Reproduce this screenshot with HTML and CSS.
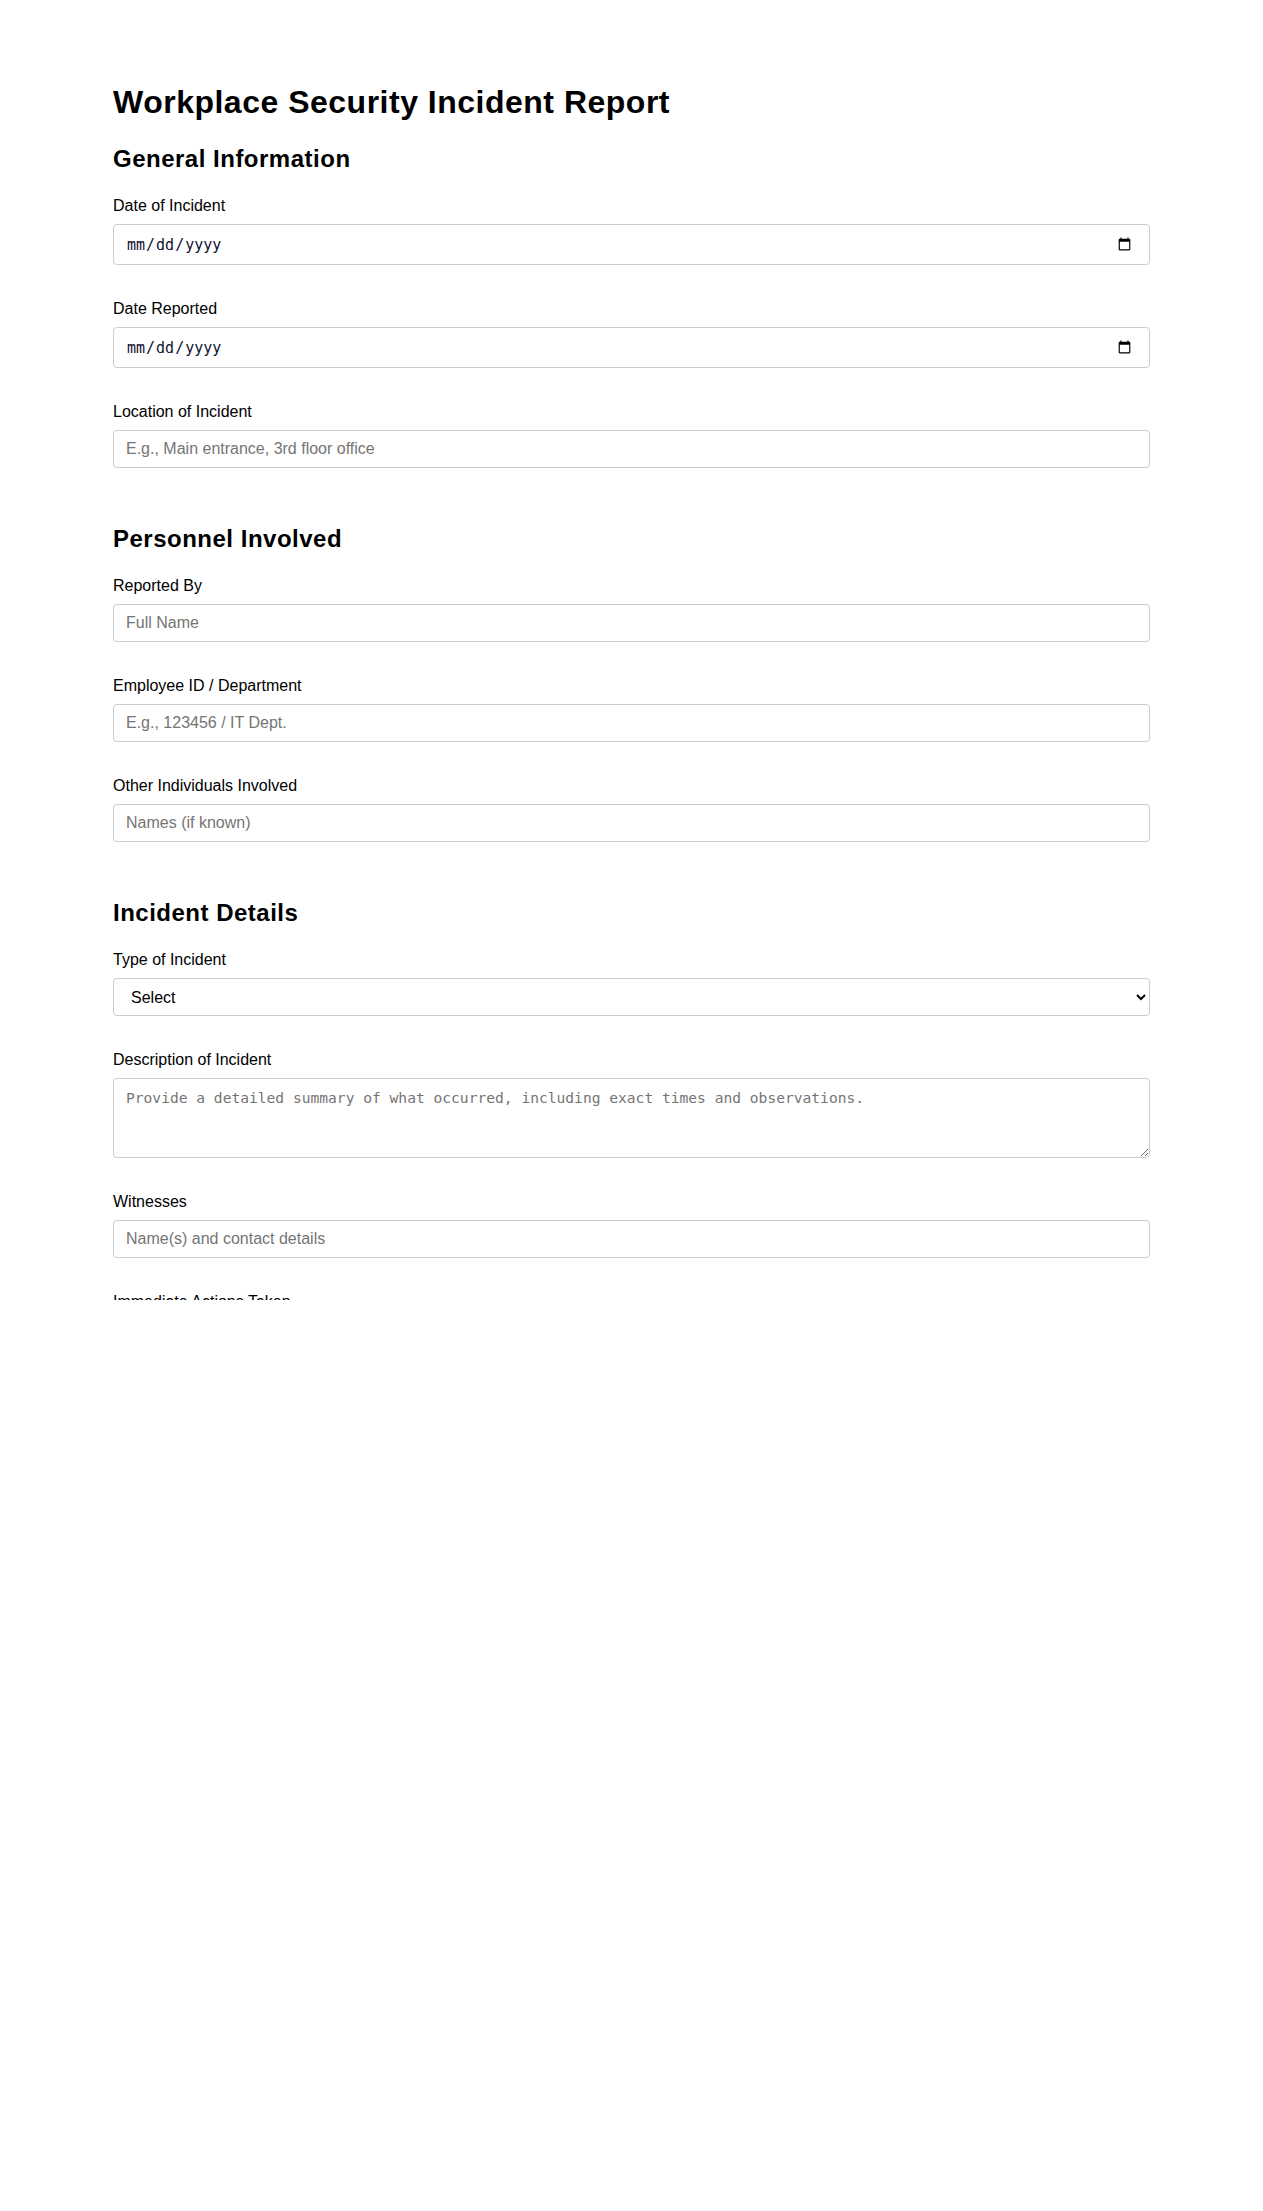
FILE: index.html
```html
<!DOCTYPE html>
<html lang="en">
<head>
<meta charset="utf-8">
<title>Workplace Security Incident Report</title>
<link rel="stylesheet" href="styles.css">
</head>
<body>
<div class="viewport">
  <form class="report">
    <h1 class="title">Workplace Security Incident Report</h1>

    <section class="section">
      <h2 class="section-title">General Information</h2>
      <div class="field">
        <label class="label" for="date-incident">Date of Incident</label>
        <input class="control control-date" type="date" id="date-incident">
      </div>
      <div class="field">
        <label class="label" for="date-reported">Date Reported</label>
        <input class="control control-date" type="date" id="date-reported">
      </div>
      <div class="field">
        <label class="label" for="location">Location of Incident</label>
        <input class="control" type="text" id="location" placeholder="E.g., Main entrance, 3rd floor office">
      </div>
    </section>

    <section class="section">
      <h2 class="section-title">Personnel Involved</h2>
      <div class="field">
        <label class="label" for="reported-by">Reported By</label>
        <input class="control" type="text" id="reported-by" placeholder="Full Name">
      </div>
      <div class="field">
        <label class="label" for="employee">Employee ID / Department</label>
        <input class="control" type="text" id="employee" placeholder="E.g., 123456 / IT Dept.">
      </div>
      <div class="field">
        <label class="label" for="others">Other Individuals Involved</label>
        <input class="control" type="text" id="others" placeholder="Names (if known)">
      </div>
    </section>

    <section class="section">
      <h2 class="section-title">Incident Details</h2>
      <div class="field">
        <label class="label" for="type">Type of Incident</label>
        <select class="control control-select" id="type">
          <option>Select</option>
          <option>Unauthorized Access</option>
          <option>Theft</option>
          <option>Vandalism</option>
          <option>Workplace Violence</option>
          <option>Other</option>
        </select>
      </div>
      <div class="field">
        <label class="label" for="description">Description of Incident</label>
        <textarea class="control control-area" id="description" placeholder="Provide a detailed summary of what occurred, including exact times and observations."></textarea>
      </div>
      <div class="field">
        <label class="label" for="witnesses">Witnesses</label>
        <input class="control" type="text" id="witnesses" placeholder="Name(s) and contact details">
      </div>
      <div class="field">
        <label class="label" for="actions">Immediate Actions Taken</label>
        <textarea class="control control-area" id="actions" placeholder="Describe any actions taken immediately after the incident."></textarea>
      </div>
    </section>
  </form>
</div>
</body>
</html>
```

FILE: styles.css
```css
* {
  box-sizing: border-box;
}

html, body {
  margin: 0;
  padding: 0;
  background: #ffffff;
}

body {
  font-family: "Liberation Sans", Arial, sans-serif;
  color: #000000;
}

.viewport {
  height: 1300px;
  overflow: hidden;
}

.report {
  width: 1037px;
  margin: 0 auto;
  padding-top: 84px;
}

.title {
  margin: 0 0 24px;
  font-size: 32px;
  line-height: 37px;
  font-weight: 700;
  letter-spacing: 0.5px;
}

.section {
  padding-bottom: 22px;
}

.section-title {
  margin: 0 0 24px;
  font-size: 24px;
  line-height: 28px;
  font-weight: 700;
  letter-spacing: 0.5px;
}

.field {
  margin-bottom: 35px;
}

.label {
  display: block;
  font-size: 16px;
  line-height: 18px;
  margin-bottom: 9px;
}

.control {
  display: block;
  width: 100%;
  height: 38px;
  margin: 0;
  padding: 0 12px;
  border: 1px solid #cccccc;
  border-radius: 4px;
  background: #ffffff;
  color: #000000;
  font-family: "Liberation Sans", Arial, sans-serif;
  font-size: 16px;
}

.control::placeholder {
  color: #757575;
}

.control-date {
  height: 41px;
  padding-right: 15px;
  font-family: "DejaVu Sans Mono", monospace;
  font-size: 15px;
  color: #101030;
}

.control-select {
  padding: 0 8px 0 13px;
}

.control-area {
  height: 80px;
  padding: 10px 12px;
  font-family: "DejaVu Sans Mono", monospace;
  font-size: 14.6px;
  line-height: 18px;
  resize: vertical;
}
```
